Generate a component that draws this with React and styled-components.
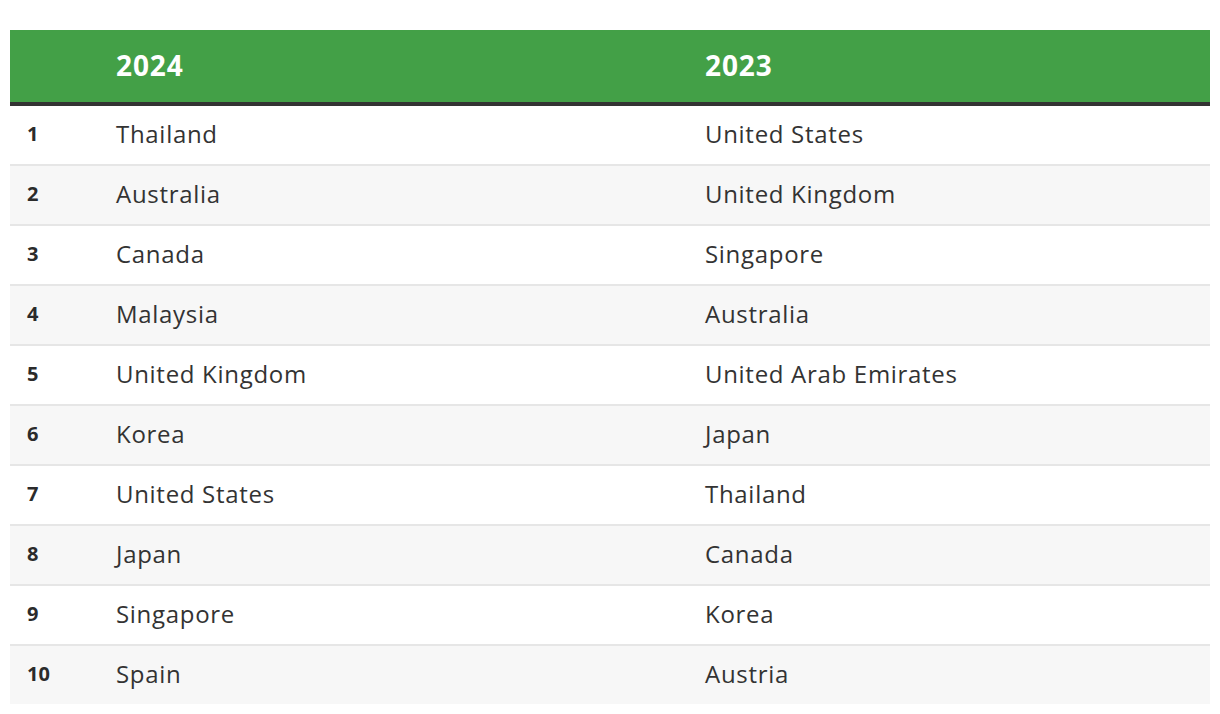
import styled, { createGlobalStyle } from "styled-components";

const GlobalStyle = createGlobalStyle`
  html, body {
    margin: 0;
    padding: 0;
    background: #ffffff;
  }
  body {
    font-family: "Open Sans", "Noto Sans", sans-serif;
    color: #333333;
  }
`;

const Page = styled.div`
  padding: 30px 10px 10px;
`;

const Table = styled.div`
  width: 1200px;
  display: flex;
  flex-direction: column;
`;

const HeaderRow = styled.div`
  display: grid;
  grid-template-columns: 89px 590px 1fr;
  height: 72px;
  background: #43a047;
  border-bottom: 4px solid #333333;
`;

const HeaderCell = styled.div`
  display: flex;
  align-items: center;
  padding-left: ${(p) => (p.$last ? "16px" : "17px")};
  padding-bottom: 3px;
  font-size: 28px;
  font-weight: 700;
  color: #ffffff;
  letter-spacing: 0.9px;
`;

const Row = styled.div`
  display: grid;
  grid-template-columns: 89px 590px 1fr;
  height: 58px;
  background: ${(p) => (p.$striped ? "#f7f7f7" : "#ffffff")};
  border-bottom: ${(p) => (p.$final ? "none" : "2px solid #e6e6e6")};
`;

const RankCell = styled.div`
  display: flex;
  align-items: center;
  padding-left: 17px;
  padding-bottom: 3px;
  font-size: 20px;
  font-weight: 700;
  color: #2b2b2b;
`;

const NameCell = styled.div`
  display: flex;
  align-items: center;
  padding-left: ${(p) => (p.$last ? "16px" : "17px")};
  padding-bottom: 3px;
  font-size: 24px;
  letter-spacing: 0.7px;
  color: #333333;
`;

const rows = [
  ["Thailand", "United States"],
  ["Australia", "United Kingdom"],
  ["Canada", "Singapore"],
  ["Malaysia", "Australia"],
  ["United Kingdom", "United Arab Emirates"],
  ["Korea", "Japan"],
  ["United States", "Thailand"],
  ["Japan", "Canada"],
  ["Singapore", "Korea"],
  ["Spain", "Austria"],
];

export default function App() {
  return (
    <Page>
      <GlobalStyle />
      <Table>
        <HeaderRow>
          <HeaderCell />
          <HeaderCell>2024</HeaderCell>
          <HeaderCell $last>2023</HeaderCell>
        </HeaderRow>
        {rows.map(([a, b], i) => (
          <Row key={i} $striped={i % 2 === 1} $final={i === rows.length - 1}>
            <RankCell>{i + 1}</RankCell>
            <NameCell>{a}</NameCell>
            <NameCell $last>{b}</NameCell>
          </Row>
        ))}
      </Table>
    </Page>
  );
}
